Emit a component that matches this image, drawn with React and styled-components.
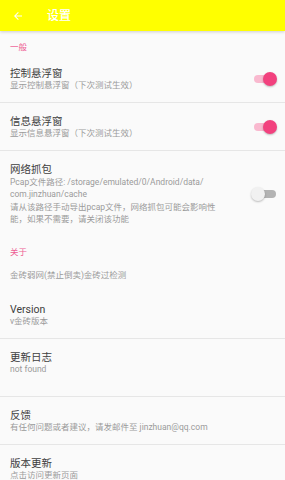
import React, { useState } from 'react';
import styled, { createGlobalStyle } from 'styled-components';

const GlobalStyle = createGlobalStyle`
  html, body {
    margin: 0;
    padding: 0;
    background: #fafafa;
  }
  body {
    font-family: Roboto, "Noto Sans CJK SC", "Noto Sans", sans-serif;
  }
`;

const Page = styled.div`
  width: 285px;
  height: 480px;
  overflow: hidden;
  background: #fafafa;
`;

const Toolbar = styled.header`
  display: flex;
  align-items: center;
  height: 31px;
  background: #ffff00;
  box-shadow: 0 1px 3px rgba(0, 0, 0, 0.18);
  position: relative;
  z-index: 1;
`;

const BackButton = styled.button`
  display: flex;
  align-items: center;
  justify-content: center;
  width: 34px;
  height: 31px;
  padding: 0 0 0 2px;
  border: none;
  background: transparent;
`;

const Title = styled.h1`
  margin: 0 0 0 13px;
  font-size: 12px;
  font-weight: 500;
  color: #fff;
  line-height: 14px;
`;

const Category = styled.div`
  padding: 11px 10px 3px;
  font-size: 8.5px;
  line-height: 10px;
  color: #ee5d94;
`;

const Row = styled.div`
  display: flex;
  align-items: center;
  padding: ${(p) => p.$pad || '12px 8px 11px 10px'};
  border-bottom: ${(p) => (p.$divider ? '1px solid #e6e6e6' : 'none')};
`;

const Texts = styled.div`
  flex: 1;
  min-width: 0;
`;

const RowTitle = styled.div`
  font-size: 10.5px;
  line-height: 13px;
  color: #404040;
`;

const Summary = styled.div`
  font-size: 8.5px;
  line-height: ${(p) => (p.$multi ? '12.3px' : '11px')};
  color: #9a9a9a;
  white-space: pre-line;
`;

const SwitchBox = styled.span`
  position: relative;
  flex: none;
  width: 26px;
  height: 16px;
  margin: 0 0 0 14px;

  &::before {
    content: '';
    position: absolute;
    left: 3px;
    right: 1px;
    top: 4px;
    height: 8px;
    border-radius: 4px;
    background: ${(p) => (p.$on ? '#f9b9cf' : '#b3b3b3')};
  }

  &::after {
    content: '';
    position: absolute;
    top: 1px;
    width: 14px;
    height: 14px;
    border-radius: 50%;
    left: ${(p) => (p.$on ? '12px' : '0')};
    background: ${(p) => (p.$on ? '#f2417e' : '#f1f1f1')};
    box-shadow: 0 1px 2px rgba(0, 0, 0, 0.25);
  }
`;

const BackArrow = () => (
  <svg width="12" height="12" viewBox="0 0 24 24">
    <path fill="#fff" d="M20 11H7.83l5.59-5.59L12 4l-8 8 8 8 1.41-1.41L7.83 13H20v-2z" />
  </svg>
);

const App = () => {
  const [floatCtl, setFloatCtl] = useState(true);
  const [floatInfo, setFloatInfo] = useState(true);
  const [capture, setCapture] = useState(false);

  return (
    <Page>
      <GlobalStyle />
      <Toolbar>
        <BackButton aria-label="back"><BackArrow /></BackButton>
        <Title>设置</Title>
      </Toolbar>

      <Category>一般</Category>
      <Row $divider onClick={() => setFloatCtl(!floatCtl)}>
        <Texts>
          <RowTitle>控制悬浮窗</RowTitle>
          <Summary>显示控制悬浮窗（下次测试生效）</Summary>
        </Texts>
        <SwitchBox $on={floatCtl} />
      </Row>
      <Row $divider onClick={() => setFloatInfo(!floatInfo)}>
        <Texts>
          <RowTitle>信息悬浮窗</RowTitle>
          <Summary>显示信息悬浮窗（下次测试生效）</Summary>
        </Texts>
        <SwitchBox $on={floatInfo} />
      </Row>
      <Row onClick={() => setCapture(!capture)}>
        <Texts>
          <RowTitle>网络抓包</RowTitle>
          <Summary $multi>
            {'Pcap文件路径: /storage/emulated/0/Android/data/\ncom.jinzhuan/cache\n请从该路径手动导出pcap文件，网络抓包可能会影响性\n能，如果不需要，请关闭该功能'}
          </Summary>
        </Texts>
        <SwitchBox $on={capture} />
      </Row>

      <Category>关于</Category>
      <Row $pad="10px 8px 10px 10px">
        <Texts>
          <Summary>金砖弱网(禁止倒卖)金砖过检测</Summary>
        </Texts>
      </Row>
      <Row $divider>
        <Texts>
          <RowTitle>Version</RowTitle>
          <Summary>v金砖版本</Summary>
        </Texts>
      </Row>
      <Row $divider $pad="12px 8px 21px 10px">
        <Texts>
          <RowTitle>更新日志</RowTitle>
          <Summary>not found</Summary>
        </Texts>
      </Row>
      <Row $divider>
        <Texts>
          <RowTitle>反馈</RowTitle>
          <Summary>有任何问题或者建议，请发邮件至 jinzhuan@qq.com</Summary>
        </Texts>
      </Row>
      <Row>
        <Texts>
          <RowTitle>版本更新</RowTitle>
          <Summary>点击访问更新页面</Summary>
        </Texts>
      </Row>
    </Page>
  );
};

export default App;
